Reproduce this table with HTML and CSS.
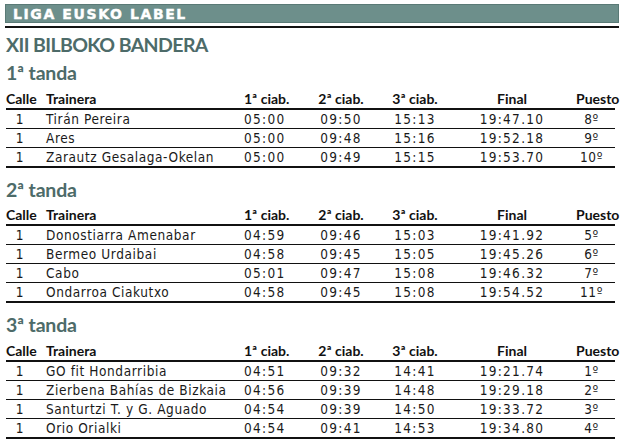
FILE: index.html
```html
<!DOCTYPE html>
<html lang="es">
<head>
<meta charset="utf-8">
<title>Liga Eusko Label - XII Bilboko Bandera</title>
<link rel="stylesheet" href="styles.css">
</head>
<body>
<div class="sheet">
  <div class="banner"><span class="banner-text">LIGA EUSKO LABEL</span></div>
  <div class="rule"></div>
  <h1 class="event">XII BILBOKO BANDERA</h1>

  <section class="heat">
    <h2 class="heat-title">1ª tanda</h2>
    <table class="results">
      <colgroup><col class="w-lane"><col class="w-boat"><col class="w-t1"><col class="w-t2"><col class="w-t3"><col class="w-fin"><col class="w-pos"></colgroup>
      <thead><tr><th class="lane">Calle</th><th class="boat">Trainera</th><th class="t1">1ª ciab.</th><th class="tc">2ª ciab.</th><th class="tc">3ª ciab.</th><th class="tc">Final</th><th class="pos">Puesto</th></tr></thead>
      <tbody>
        <tr><td class="lane">1</td><td class="boat">Tirán Pereira</td><td class="t1 time">05:00</td><td class="tc time">09:50</td><td class="tc time">15:13</td><td class="tc time">19:47.10</td><td class="pos">8º</td></tr>
        <tr><td class="lane">1</td><td class="boat">Ares</td><td class="t1 time">05:00</td><td class="tc time">09:48</td><td class="tc time">15:16</td><td class="tc time">19:52.18</td><td class="pos">9º</td></tr>
        <tr><td class="lane">1</td><td class="boat">Zarautz Gesalaga-Okelan</td><td class="t1 time">05:00</td><td class="tc time">09:49</td><td class="tc time">15:15</td><td class="tc time">19:53.70</td><td class="pos">10º</td></tr>
      </tbody>
    </table>
  </section>

  <section class="heat">
    <h2 class="heat-title">2ª tanda</h2>
    <table class="results">
      <colgroup><col class="w-lane"><col class="w-boat"><col class="w-t1"><col class="w-t2"><col class="w-t3"><col class="w-fin"><col class="w-pos"></colgroup>
      <thead><tr><th class="lane">Calle</th><th class="boat">Trainera</th><th class="t1">1ª ciab.</th><th class="tc">2ª ciab.</th><th class="tc">3ª ciab.</th><th class="tc">Final</th><th class="pos">Puesto</th></tr></thead>
      <tbody>
        <tr><td class="lane">1</td><td class="boat">Donostiarra Amenabar</td><td class="t1 time">04:59</td><td class="tc time">09:46</td><td class="tc time">15:03</td><td class="tc time">19:41.92</td><td class="pos">5º</td></tr>
        <tr><td class="lane">1</td><td class="boat">Bermeo Urdaibai</td><td class="t1 time">04:58</td><td class="tc time">09:45</td><td class="tc time">15:05</td><td class="tc time">19:45.26</td><td class="pos">6º</td></tr>
        <tr><td class="lane">1</td><td class="boat">Cabo</td><td class="t1 time">05:01</td><td class="tc time">09:47</td><td class="tc time">15:08</td><td class="tc time">19:46.32</td><td class="pos">7º</td></tr>
        <tr><td class="lane">1</td><td class="boat">Ondarroa Ciakutxo</td><td class="t1 time">04:58</td><td class="tc time">09:45</td><td class="tc time">15:08</td><td class="tc time">19:54.52</td><td class="pos">11º</td></tr>
      </tbody>
    </table>
  </section>

  <section class="heat">
    <h2 class="heat-title">3ª tanda</h2>
    <table class="results">
      <colgroup><col class="w-lane"><col class="w-boat"><col class="w-t1"><col class="w-t2"><col class="w-t3"><col class="w-fin"><col class="w-pos"></colgroup>
      <thead><tr><th class="lane">Calle</th><th class="boat">Trainera</th><th class="t1">1ª ciab.</th><th class="tc">2ª ciab.</th><th class="tc">3ª ciab.</th><th class="tc">Final</th><th class="pos">Puesto</th></tr></thead>
      <tbody>
        <tr><td class="lane">1</td><td class="boat">GO fit Hondarribia</td><td class="t1 time">04:51</td><td class="tc time">09:32</td><td class="tc time">14:41</td><td class="tc time">19:21.74</td><td class="pos">1º</td></tr>
        <tr><td class="lane">1</td><td class="boat">Zierbena Bahías de Bizkaia</td><td class="t1 time">04:56</td><td class="tc time">09:39</td><td class="tc time">14:48</td><td class="tc time">19:29.18</td><td class="pos">2º</td></tr>
        <tr><td class="lane">1</td><td class="boat">Santurtzi T. y G. Aguado</td><td class="t1 time">04:54</td><td class="tc time">09:39</td><td class="tc time">14:50</td><td class="tc time">19:33.72</td><td class="pos">3º</td></tr>
        <tr><td class="lane">1</td><td class="boat">Orio Orialki</td><td class="t1 time">04:54</td><td class="tc time">09:41</td><td class="tc time">14:53</td><td class="tc time">19:34.80</td><td class="pos">4º</td></tr>
      </tbody>
    </table>
  </section>
</div>
</body>
</html>
```

FILE: styles.css
```css
html, body {
  margin: 0;
  padding: 0;
  background: #ffffff;
}

.sheet {
  width: 624px;
  padding-top: 4px;
  box-sizing: border-box;
  color: #111111;
}

.banner {
  margin-left: 5px;
  width: 614px;
  height: 19px;
  box-sizing: border-box;
  background: #6d8f8b;
  border: 1px solid #5a7a76;
  display: flex;
  align-items: center;
  padding-left: 7px;
}

.banner-text {
  font-family: "DejaVu Sans", "Liberation Sans", sans-serif;
  font-weight: 700;
  font-size: 14px;
  letter-spacing: 1.6px;
  color: #ffffff;
  -webkit-text-stroke: 0.4px #ffffff;
  line-height: 1;
}

.rule {
  margin: 3px 0 0 5px;
  width: 614px;
  height: 2px;
  background: #111111;
}

.event {
  margin: 5px 0 0 6px;
  font-family: Lato, "Open Sans", sans-serif;
  font-weight: 700;
  font-size: 19.5px;
  line-height: 24px;
  letter-spacing: -0.6px;
  color: #4d6b69;
}

.heat {
  margin-left: 6px;
  width: 609px;
}

.heat + .heat {
  margin-top: 10px;
}

.heat-title {
  margin: 4px 0 0 0;
  font-family: Lato, "Open Sans", sans-serif;
  font-weight: 700;
  font-size: 19.5px;
  line-height: 24px;
  letter-spacing: -0.2px;
  color: #4d6b69;
}

.results {
  margin-top: 5.5px;
  width: 609px;
  table-layout: fixed;
  border-collapse: separate;
  border-spacing: 0;
}

.w-lane { width: 38px; }
.w-boat { width: 200px; }
.w-t1 { width: 56px; }
.w-t2 { width: 82px; }
.w-t3 { width: 66px; }
.w-fin { width: 128px; }
.w-pos { width: 39px; }

.results th {
  font-family: Lato, "Open Sans", sans-serif;
  font-weight: 700;
  font-size: 14px;
  line-height: 16px;
  padding: 0 0 1px 0;
  border-bottom: 2px solid #111111;
  white-space: nowrap;
  color: #111111;
}

.results td {
  font-family: "DejaVu Sans Condensed", "DejaVu Sans", sans-serif;
  font-size: 13.5px;
  line-height: 18px;
  padding: 0;
  letter-spacing: 0.6px;
  border-bottom: 1px solid #111111;
  white-space: nowrap;
  color: #1a1a1a;
}

.results tbody tr:last-child td {
  border-bottom-width: 2px;
}

.results th.lane { text-align: left; }
.results td.lane { text-align: center; padding-right: 10px; }
.results .boat { text-align: left; padding-left: 2px; }
.results .t1 { text-align: left; }
.results .tc { text-align: center; }
.results th.pos { text-align: right; padding-right: 2px; }
.results td.pos { text-align: center; padding-right: 8px; }
.results td.time { letter-spacing: 1.3px; }
```
